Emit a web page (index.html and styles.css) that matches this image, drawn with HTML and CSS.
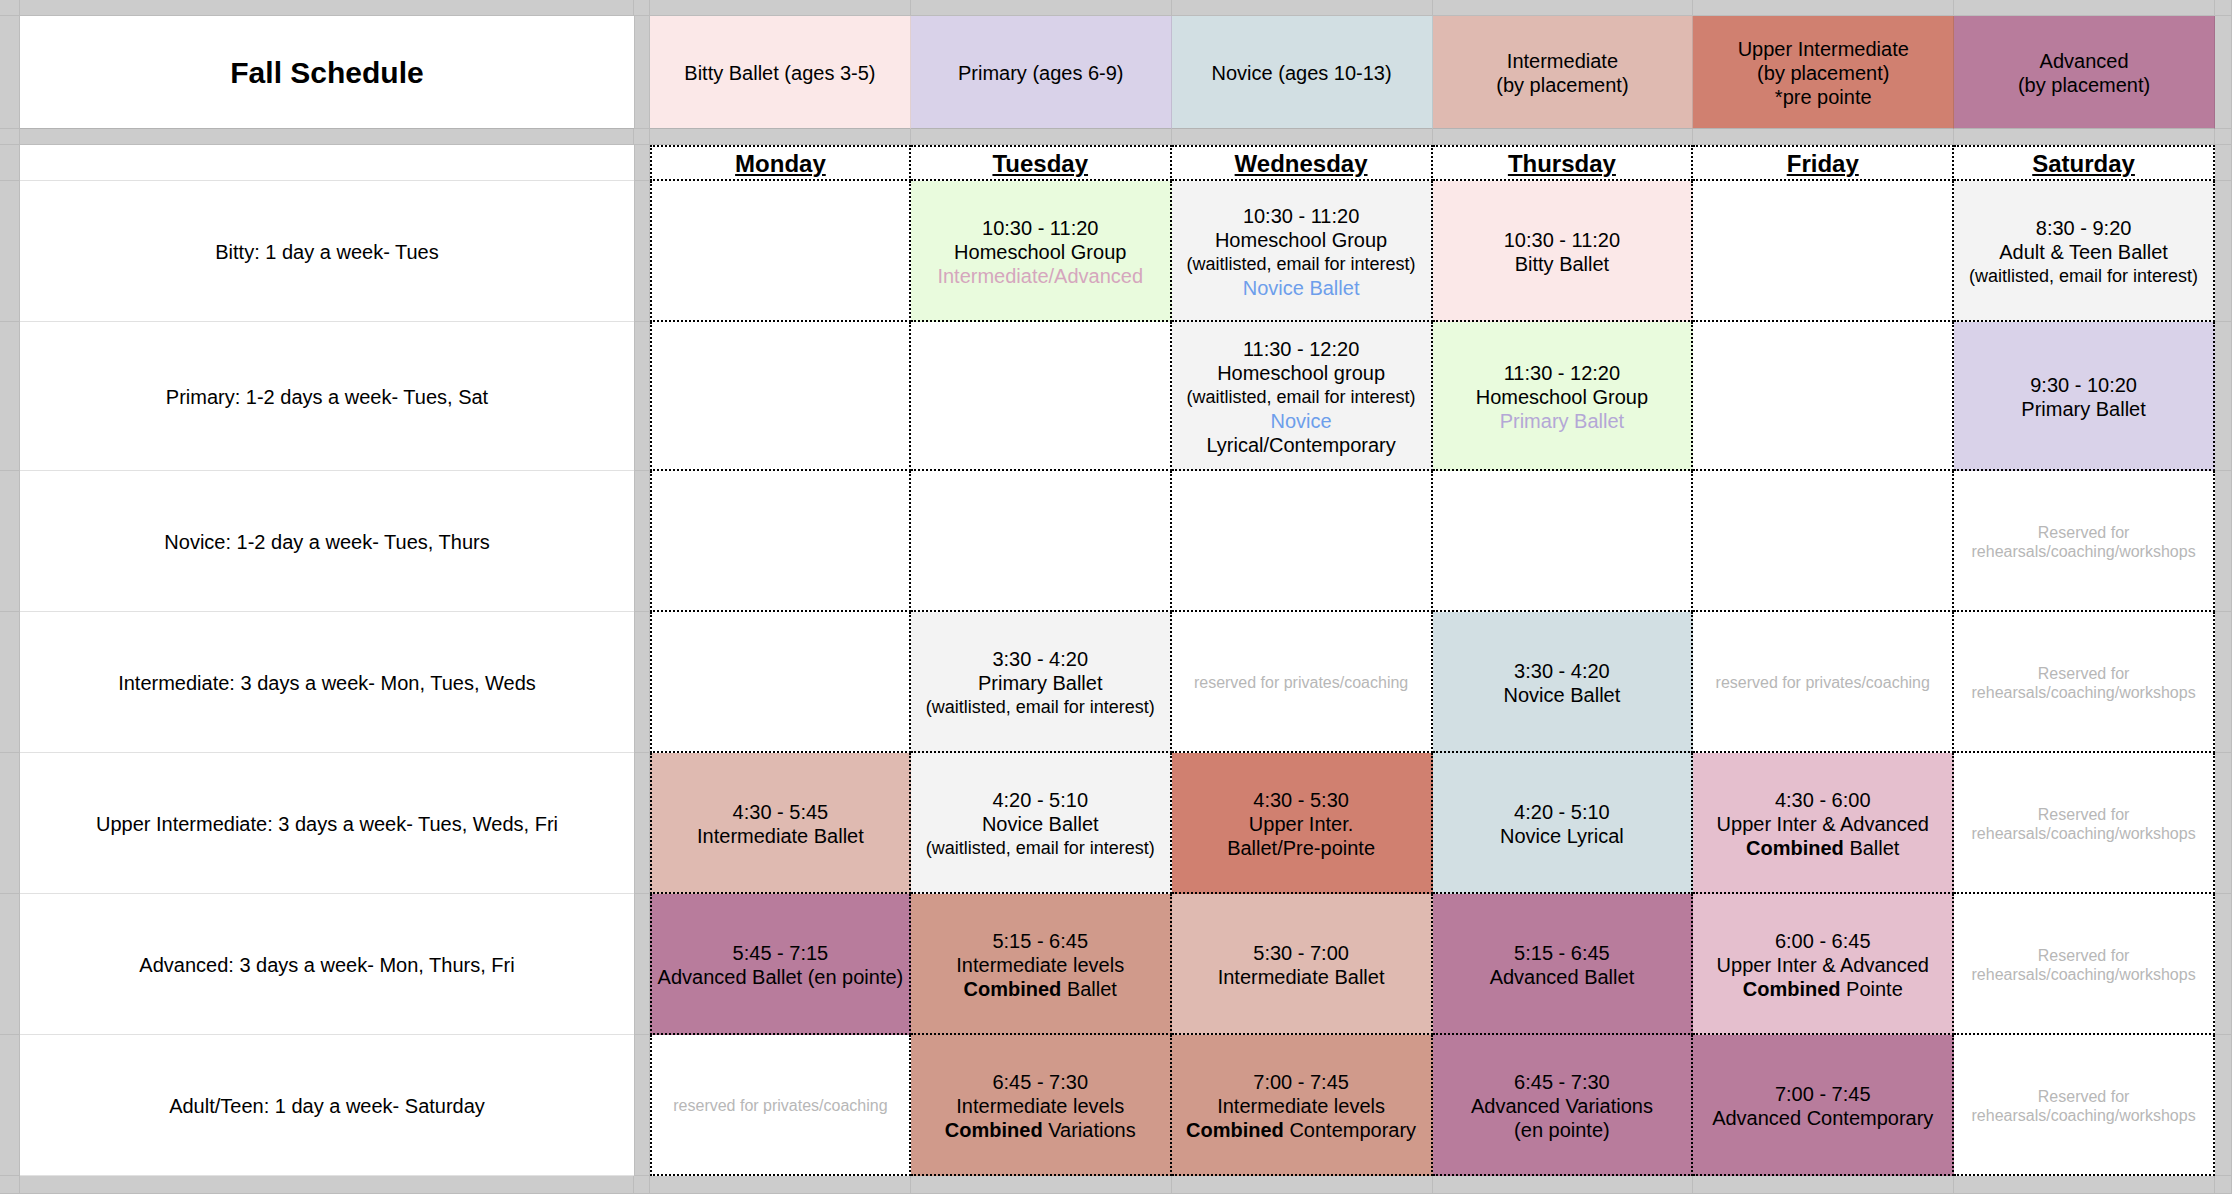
FILE: index.html
```html
<!DOCTYPE html>
<html lang="en">
<head>
<meta charset="utf-8">
<title>Fall Schedule</title>
<link rel="stylesheet" href="styles.css">
</head>
<body>
<div class="sheet">
  <!-- row 1: top gutter strip -->
  <i class="g"></i><i class="g"></i><i class="g"></i><i class="g"></i><i class="g"></i><i class="g"></i><i class="g"></i><i class="g"></i><i class="g"></i><i class="g"></i>

  <!-- row 2: title + level headers -->
  <i class="g"></i>
  <div class="title">Fall Schedule</div>
  <i class="gap"></i>
  <div class="lvl c-bitty"><div>Bitty Ballet (ages 3-5)</div></div>
  <div class="lvl c-primary"><div>Primary (ages 6-9)</div></div>
  <div class="lvl c-novice"><div>Novice (ages 10-13)</div></div>
  <div class="lvl c-inter"><div>Intermediate</div><div>(by placement)</div></div>
  <div class="lvl c-upper"><div>Upper Intermediate</div><div>(by placement)</div><div>*pre pointe</div></div>
  <div class="lvl c-adv"><div>Advanced</div><div>(by placement)</div></div>
  <i class="g"></i>

  <!-- row 3: gutter strip -->
  <i class="g"></i><i class="g"></i><i class="g"></i><i class="g"></i><i class="g"></i><i class="g"></i><i class="g"></i><i class="g"></i><i class="g"></i><i class="g"></i>

  <!-- row 4: day names -->
  <i class="g"></i>
  <div class="label"></div>
  <i class="gap"></i>
  <div class="day mon">Monday</div>
  <div class="day">Tuesday</div>
  <div class="day">Wednesday</div>
  <div class="day">Thursday</div>
  <div class="day">Friday</div>
  <div class="day">Saturday</div>
  <i class="g"></i>

  <!-- Bitty -->
  <i class="g"></i>
  <div class="label">Bitty: 1 day a week- Tues</div>
  <i class="gap"></i>
  <div class="cell mon"></div>
  <div class="cell bg-green"><div class="ln">10:30 - 11:20</div><div class="ln">Homeschool Group</div><div class="ln t-pink">Intermediate/Advanced</div></div>
  <div class="cell bg-gray"><div class="ln">10:30 - 11:20</div><div class="ln">Homeschool Group</div><div class="ln sm">(waitlisted, email for interest)</div><div class="ln t-blue">Novice Ballet</div></div>
  <div class="cell bg-bitty"><div class="ln">10:30 - 11:20</div><div class="ln">Bitty Ballet</div></div>
  <div class="cell"></div>
  <div class="cell bg-gray"><div class="ln">8:30 - 9:20</div><div class="ln">Adult &amp; Teen Ballet</div><div class="ln sm">(waitlisted, email for interest)</div></div>
  <i class="g"></i>

  <!-- Primary -->
  <i class="g"></i>
  <div class="label">Primary: 1-2 days a week- Tues, Sat</div>
  <i class="gap"></i>
  <div class="cell mon"></div>
  <div class="cell"></div>
  <div class="cell bg-gray"><div class="ln">11:30 - 12:20</div><div class="ln">Homeschool group</div><div class="ln sm">(waitlisted, email for interest)</div><div class="ln t-blue">Novice</div><div class="ln">Lyrical/Contemporary</div></div>
  <div class="cell bg-green"><div class="ln">11:30 - 12:20</div><div class="ln">Homeschool Group</div><div class="ln t-lav">Primary Ballet</div></div>
  <div class="cell"></div>
  <div class="cell bg-primary"><div class="ln">9:30 - 10:20</div><div class="ln">Primary Ballet</div></div>
  <i class="g"></i>

  <!-- Novice -->
  <i class="g"></i>
  <div class="label">Novice: 1-2 day a week- Tues, Thurs</div>
  <i class="gap"></i>
  <div class="cell mon"></div>
  <div class="cell"></div>
  <div class="cell"></div>
  <div class="cell"></div>
  <div class="cell"></div>
  <div class="cell"><div class="res">Reserved for</div><div class="res">rehearsals/coaching/workshops</div></div>
  <i class="g"></i>

  <!-- Intermediate -->
  <i class="g"></i>
  <div class="label">Intermediate: 3 days a week- Mon, Tues, Weds</div>
  <i class="gap"></i>
  <div class="cell mon"></div>
  <div class="cell bg-gray"><div class="ln">3:30 - 4:20</div><div class="ln">Primary Ballet</div><div class="ln sm">(waitlisted, email for interest)</div></div>
  <div class="cell"><div class="res">reserved for privates/coaching</div></div>
  <div class="cell bg-novice"><div class="ln">3:30 - 4:20</div><div class="ln">Novice Ballet</div></div>
  <div class="cell"><div class="res">reserved for privates/coaching</div></div>
  <div class="cell"><div class="res">Reserved for</div><div class="res">rehearsals/coaching/workshops</div></div>
  <i class="g"></i>

  <!-- Upper Intermediate -->
  <i class="g"></i>
  <div class="label">Upper Intermediate: 3 days a week- Tues, Weds, Fri</div>
  <i class="gap"></i>
  <div class="cell mon bg-inter"><div class="ln">4:30 - 5:45</div><div class="ln">Intermediate Ballet</div></div>
  <div class="cell bg-gray"><div class="ln">4:20 - 5:10</div><div class="ln">Novice Ballet</div><div class="ln sm">(waitlisted, email for interest)</div></div>
  <div class="cell bg-upper"><div class="ln">4:30 - 5:30</div><div class="ln">Upper Inter.</div><div class="ln">Ballet/Pre-pointe</div></div>
  <div class="cell bg-novice"><div class="ln">4:20 - 5:10</div><div class="ln">Novice Lyrical</div></div>
  <div class="cell bg-rose"><div class="ln">4:30 - 6:00</div><div class="ln">Upper Inter &amp; Advanced</div><div class="ln"><b>Combined</b> Ballet</div></div>
  <div class="cell"><div class="res">Reserved for</div><div class="res">rehearsals/coaching/workshops</div></div>
  <i class="g"></i>

  <!-- Advanced -->
  <i class="g"></i>
  <div class="label">Advanced: 3 days a week- Mon, Thurs, Fri</div>
  <i class="gap"></i>
  <div class="cell mon bg-adv"><div class="ln">5:45 - 7:15</div><div class="ln">Advanced Ballet (en pointe)</div></div>
  <div class="cell bg-comb"><div class="ln">5:15 - 6:45</div><div class="ln">Intermediate levels</div><div class="ln"><b>Combined</b> Ballet</div></div>
  <div class="cell bg-inter"><div class="ln">5:30 - 7:00</div><div class="ln">Intermediate Ballet</div></div>
  <div class="cell bg-adv"><div class="ln">5:15 - 6:45</div><div class="ln">Advanced Ballet</div></div>
  <div class="cell bg-rose"><div class="ln">6:00 - 6:45</div><div class="ln">Upper Inter &amp; Advanced</div><div class="ln"><b>Combined</b> Pointe</div></div>
  <div class="cell"><div class="res">Reserved for</div><div class="res">rehearsals/coaching/workshops</div></div>
  <i class="g"></i>

  <!-- Adult/Teen -->
  <i class="g"></i>
  <div class="label">Adult/Teen: 1 day a week- Saturday</div>
  <i class="gap"></i>
  <div class="cell mon"><div class="res">reserved for privates/coaching</div></div>
  <div class="cell bg-comb"><div class="ln">6:45 - 7:30</div><div class="ln">Intermediate levels</div><div class="ln"><b>Combined</b> Variations</div></div>
  <div class="cell bg-comb"><div class="ln">7:00 - 7:45</div><div class="ln">Intermediate levels</div><div class="ln"><b>Combined</b> Contemporary</div></div>
  <div class="cell bg-adv"><div class="ln">6:45 - 7:30</div><div class="ln">Advanced Variations</div><div class="ln">(en pointe)</div></div>
  <div class="cell bg-adv"><div class="ln">7:00 - 7:45</div><div class="ln">Advanced Contemporary</div></div>
  <div class="cell"><div class="res">Reserved for</div><div class="res">rehearsals/coaching/workshops</div></div>
  <i class="g"></i>

  <!-- bottom gutter strip -->
  <i class="g"></i><i class="g"></i><i class="g"></i><i class="g"></i><i class="g"></i><i class="g"></i><i class="g"></i><i class="g"></i><i class="g"></i><i class="g"></i>
</div>
</body>
</html>
```

FILE: styles.css
```css
* { box-sizing: border-box; }

html, body {
  margin: 0;
  padding: 0;
  background: #cccccc;
}

body {
  font-family: "Liberation Sans", Arial, sans-serif;
  color: #000;
  overflow: hidden;
}

.sheet {
  display: grid;
  width: 2232px;
  height: 1194px;
  grid-template-columns: 20px 614px 16px repeat(6, 1fr) 17px;
  grid-template-rows: 16px 113px 16px 36px 141px 149px 141px 141px 141px 141px 141px 18px;
  background: #cccccc;
}

.g {
  display: block;
  background: #cccccc;
  border-right: 1px solid #bcbcbc;
  border-bottom: 1px solid #bcbcbc;
}

.gap {
  display: block;
  background: #cccccc;
  border-left: 1px solid #bdbdbd;
  border-right: 1px solid #bdbdbd;
  border-bottom: 1px solid #bdbdbd;
}

.title {
  display: flex;
  align-items: center;
  justify-content: center;
  padding-top: 2px;
  background: #fff;
  font-weight: bold;
  font-size: 30px;
  border-bottom: 1px solid #b3b3b3;
}

.lvl {
  display: flex;
  flex-direction: column;
  align-items: center;
  justify-content: center;
  padding-top: 2px;
  text-align: center;
  font-size: 20px;
  line-height: 24px;
  border-right: 1px solid rgba(0, 0, 0, 0.1);
  border-bottom: 1px solid #b3b3b3;
}

.c-bitty { background: #fbe8e8; }
.c-primary { background: #d9d2e9; }
.c-novice { background: #d2dfe3; }
.c-inter { background: #dfbab1; }
.c-upper { background: #d08070; }
.c-adv { background: #b87c9c; }

.label {
  display: flex;
  align-items: center;
  justify-content: center;
  padding-top: 2px;
  background: #fff;
  font-size: 20px;
  border-bottom: 1px solid #e1e1e1;
}

.day {
  display: flex;
  align-items: center;
  justify-content: center;
  padding-top: 2px;
  background: #fff;
  font-weight: bold;
  font-size: 24px;
  text-decoration: underline;
  text-decoration-thickness: 2px;
  text-underline-offset: 2px;
  border-top: 2px dotted #000;
  border-right: 2px dotted #000;
  border-bottom: 2px dotted #000;
}

.cell {
  display: flex;
  flex-direction: column;
  align-items: center;
  justify-content: center;
  padding-top: 2px;
  text-align: center;
  background: #fff;
  font-size: 20px;
  border-right: 2px dotted #000;
  border-bottom: 2px dotted #000;
}

.mon { border-left: 2px dotted #000; }

.ln {
  line-height: 24px;
  white-space: nowrap;
}

.ln.sm { font-size: 18px; }

.res {
  font-size: 16px;
  line-height: 19px;
  color: #b7b7b7;
  white-space: nowrap;
}

.t-pink { color: #d5a6bd; }
.t-blue { color: #6d9eeb; }
.t-lav { color: #b4a7d6; }

.bg-green { background: #e9fbdd; }
.bg-gray { background: #f3f3f3; }
.bg-bitty { background: #fbe8e8; }
.bg-primary { background: #d9d2e9; }
.bg-novice { background: #d2dfe3; }
.bg-inter { background: #dfbab1; }
.bg-upper { background: #d08070; }
.bg-comb { background: #d09a8b; }
.bg-adv { background: #b87c9c; }
.bg-rose { background: #e5bfce; }
```
